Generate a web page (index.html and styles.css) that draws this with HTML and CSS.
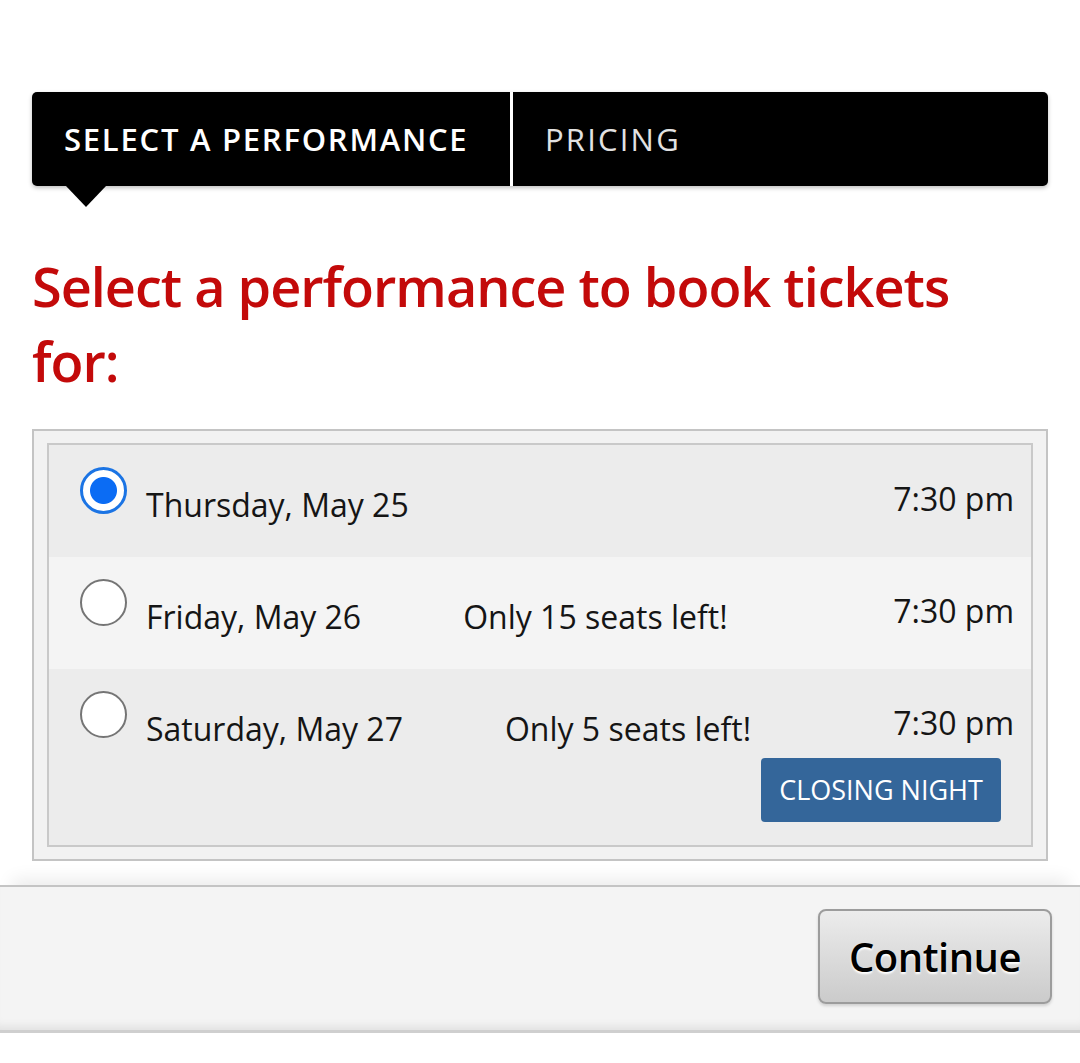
FILE: index.html
```html
<!DOCTYPE html>
<html lang="en">
<head>
<meta charset="utf-8">
<title>Select a performance</title>
<link rel="stylesheet" href="styles.css">
</head>
<body>
<div class="page">
  <nav class="steps">
    <div class="step step-active">SELECT A PERFORMANCE</div>
    <div class="step">PRICING</div>
  </nav>

  <h1 class="title">Select a performance to book tickets for:</h1>

  <div class="panel">
    <div class="list">
      <label class="row row-odd">
        <span class="radio radio-checked"></span>
        <span class="main">
          <span class="line">
            <span class="date">Thursday, May 25</span>
            <span class="time">7:30 pm</span>
          </span>
        </span>
      </label>
      <label class="row row-even">
        <span class="radio"></span>
        <span class="main">
          <span class="line">
            <span class="date">Friday, May 26</span>
            <span class="seats">Only 15 seats left!</span>
            <span class="time">7:30 pm</span>
          </span>
        </span>
      </label>
      <label class="row row-odd">
        <span class="radio"></span>
        <span class="main">
          <span class="line">
            <span class="date">Saturday, May 27</span>
            <span class="seats">Only 5 seats left!</span>
            <span class="time">7:30 pm</span>
          </span>
          <span class="badge">CLOSING NIGHT</span>
        </span>
      </label>
    </div>
  </div>
</div>

<footer class="footer">
  <button class="continue" type="button">Continue</button>
</footer>
</body>
</html>
```
FILE: styles.css
```css
* { box-sizing: border-box; }

html, body {
  margin: 0;
  padding: 0;
  background: #ffffff;
  font-family: "Open Sans", "Noto Sans", sans-serif;
  color: #111;
}

.page {
  padding: 92px 32px 0 32px;
}

.steps {
  display: flex;
  height: 94px;
  background: #000;
  border-radius: 5px;
  box-shadow: 0 2px 4px rgba(0, 0, 0, 0.25);
}

.step {
  display: flex;
  align-items: center;
  padding-left: 32px;
  color: #e2e2e2;
  font-size: 31px;
  letter-spacing: 2.2px;
  flex: 1;
}

.step-active {
  position: relative;
  flex: 0 0 481px;
  color: #fff;
  font-weight: 600;
  letter-spacing: 1.75px;
  border-right: 3px solid #fff;
}

.step-active::after {
  content: "";
  position: absolute;
  left: 34px;
  top: 100%;
  border-left: 20px solid transparent;
  border-right: 20px solid transparent;
  border-top: 21px solid #000;
}

.title {
  margin: 63px 0 30px 0;
  color: #c30a0a;
  font-size: 54px;
  font-weight: 600;
  line-height: 75px;
  letter-spacing: -1px;
}

.panel {
  border: 2px solid #c4c4c4;
  background: #f2f2f2;
  padding: 12px 13px 12px 13px;
}

.list {
  border: 2px solid #c9c9c9;
}

.row {
  display: flex;
  align-items: flex-start;
  padding: 22px 17px 23px 31px;
  font-size: 32px;
  line-height: 42px;
}

.row-odd { background: #ececec; }
.row-even { background: #f4f4f4; }

.radio {
  flex: 0 0 47px;
  width: 47px;
  height: 47px;
  border-radius: 50%;
  border: 2px solid #757575;
  background: #fff;
}

.radio-checked {
  border: 3px solid #1b74e4;
  background: radial-gradient(circle, #0b6cf4 0 13px, #fff 14px);
}

.main {
  flex: 1;
  display: flex;
  flex-direction: column;
  align-items: flex-end;
}

.line {
  align-self: stretch;
  display: flex;
  align-items: flex-start;
  margin-top: 11px;
  padding-bottom: 8px;
}

.date {
  margin-left: 19px;
  padding-top: 6px;
  color: #151515;
}

.seats {
  margin-left: 102px;
  padding-top: 6px;
  color: #151515;
}

.time {
  margin-left: auto;
  color: #151515;
}

.badge {
  margin: 0 13px 0 0;
  width: 240px;
  height: 64px;
  display: flex;
  align-items: center;
  justify-content: center;
  background: #34669a;
  color: #fff;
  border-radius: 4px;
  font-size: 27px;
}

.footer {
  margin-top: 24px;
  position: relative;
  height: 148px;
  background: #f4f4f4;
  border-top: 2px solid #c4c4c4;
  border-bottom: 3px solid #cfcfcf;
  display: flex;
  align-items: flex-start;
  justify-content: flex-end;
  padding: 22px 28px 0 0;
  box-shadow: 0 -18px 16px -12px rgba(0, 0, 0, 0.08), inset 0 -10px 8px -6px rgba(0, 0, 0, 0.08);
}

.continue {
  width: 234px;
  height: 95px;
  border: 2px solid #9c9c9c;
  border-radius: 8px;
  background: linear-gradient(#ececec, #cbcbcb);
  font-family: "Open Sans", "Noto Sans", sans-serif;
  font-size: 40px;
  font-weight: 600;
  color: #000;
  text-shadow: 0 2px 2px #fff;
  box-shadow: 0 2px 3px rgba(0, 0, 0, 0.15);
  letter-spacing: -0.5px;
}
```
